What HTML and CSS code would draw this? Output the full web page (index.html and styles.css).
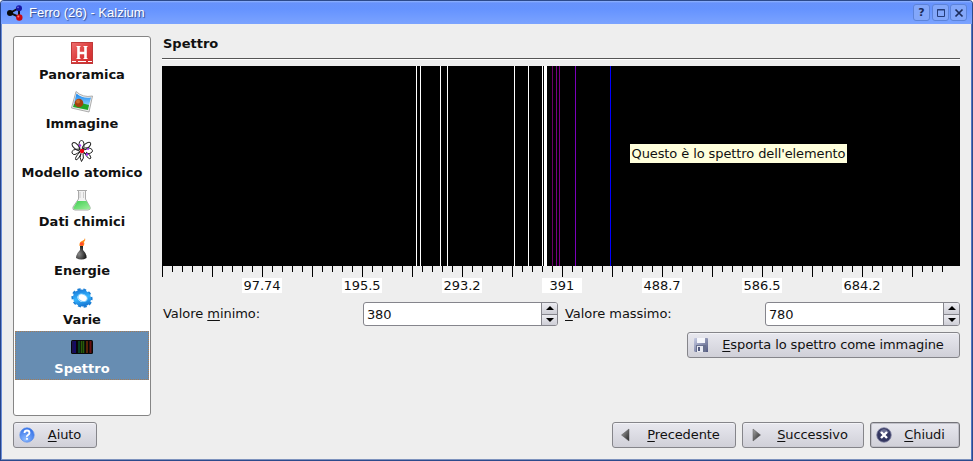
FILE: index.html
```html
<!DOCTYPE html>
<html lang="it">
<head>
<meta charset="utf-8">
<title>Ferro (26) - Kalzium</title>
<link rel="stylesheet" href="styles.css">
</head>
<body>
<svg class="defs" width="0" height="0">
  <defs>
    <linearGradient id="red" x1="0" y1="0" x2="1" y2="1"><stop offset="0" stop-color="#ef7070"/><stop offset=".5" stop-color="#dd4141"/><stop offset="1" stop-color="#cf2929"/></linearGradient>
    <linearGradient id="sky" x1="0" y1="0" x2="0" y2="1"><stop offset="0" stop-color="#1583ee"/><stop offset="1" stop-color="#9bdcff"/></linearGradient>
    <linearGradient id="gear" x1="0" y1="0" x2="1" y2="1"><stop offset="0" stop-color="#1979d8"/><stop offset=".5" stop-color="#35b5ff"/><stop offset="1" stop-color="#126fcd"/></linearGradient>
    <linearGradient id="liq" x1="0" y1="0" x2="1" y2="1"><stop offset="0" stop-color="#3fce50"/><stop offset="1" stop-color="#a2f0a0"/></linearGradient>
    <linearGradient id="arrow" x1="0" y1="0" x2="1" y2="1"><stop offset="0" stop-color="#aaa"/><stop offset="1" stop-color="#222"/></linearGradient>
    <linearGradient id="disk" x1="0" y1="0" x2="1" y2="1"><stop offset="0" stop-color="#c8cde4"/><stop offset="1" stop-color="#50577f"/></linearGradient>
    <radialGradient id="help" cx=".4" cy=".8" r=".8"><stop offset="0" stop-color="#8dbbff"/><stop offset="1" stop-color="#326fe6"/></radialGradient>
    <radialGradient id="flask" cx=".3" cy=".6" r=".7"><stop offset="0" stop-color="#888"/><stop offset="1" stop-color="#151515"/></radialGradient>
  </defs>
</svg>
<div class="window">
  <header class="titlebar">
    <svg class="app-icon" width="16" height="16" viewBox="0 0 16 16"><path d="M3 8 12 3 12 12Z" fill="none" stroke="#111" stroke-width="2"/><circle cx="3" cy="8" r="3" fill="#090909"/><circle cx="12" cy="3.2" r="3" fill="#1717a5"/><circle cx="12.3" cy="12.5" r="3.2" fill="#c90812"/><circle cx="11.3" cy="11.5" r="1" fill="#ff7777"/><circle cx="11" cy="2.4" r=".8" fill="#7777e8"/></svg>
    <span class="title">Ferro (26) - Kalzium</span>
    <span class="wbtn">?</span>
    <span class="wbtn gap"><svg width="10" height="10" viewBox="0 0 10 10"><path d="M1.5 1.5h7v7h-7zM1 2h8" fill="none" stroke="#253c79"/></svg></span>
    <span class="wbtn"><svg width="10" height="10" viewBox="0 0 10 10"><path d="M1.5 1.5l7 7M8.5 1.5l-7 7" stroke="#1c2d5c" stroke-width="1.7"/></svg></span>
  </header>
  <div class="body">
    <main class="main">
      <nav class="list">
        <div class="item"><svg width="22" height="22" viewBox="0 0 22 22"><path d="M0 0h22v22H0z" fill="url(#red)"/><path d="M.5 .5h21v21H.5z" fill="none" stroke="#bf3a3a"/><path d="M7.5 5v12M14.500 5v12M7.500 11h7" stroke="#fff" stroke-width="2.600"/><path d="M5.500 4.500h4M12.500 4.500h4M5.500 16.500h4M12.500 16.500h4M1 19.500h4M7 19.500h8M17 19.500h4" stroke="#fff"/></svg><span>Panoramica</span></div>
        <div class="item"><svg width="22" height="22" viewBox="0 0 22 22"><path d="M5 .5Q12 7 21.500 5L18 21 .5 17Z" fill="#eee" stroke="#999" stroke-width=".8"/><path d="M5.500 2.500Q12 8 20 6.500L17.500 16 2.500 14Z" fill="url(#sky)"/><path d="M3 13 10 12 18 14 17 19 2 16Z" fill="#21a528"/><circle cx="8" cy="12" r="4.300" fill="#a4410f"/><circle cx="7" cy="10.500" r="2" fill="#cb6b2d"/></svg><span>Immagine</span></div>
        <div class="item"><svg width="22" height="22" viewBox="0 0 22 22"><g fill="none" stroke="#222" stroke-width="1"><ellipse cx="10.500" cy="5.500" rx="2.500" ry="5"/><ellipse cx="5" cy="6.500" rx="2.400" ry="4.800" transform="rotate(-45 5 6.500)"/><ellipse cx="15.500" cy="6" rx="2.300" ry="5" transform="rotate(50 15.500 6)"/><ellipse cx="16" cy="10.800" rx="5.500" ry="3"/><path d="M9 9Q0 9 1 13q2 4 8-2M9 12q-6 6-4 8 2 0 5-6M10 13q-2 5 .5 8.500 3-3 1.500-8M13 12q5 9 7 6 0-3-5-6"/></g><circle cx="11" cy="11" r="2.200" fill="#f00014"/><circle cx="9" cy="5.500" r="1.200" fill="#a330ff"/><circle cx="16" cy="14.500" r="1.200" fill="#a330ff"/><circle cx="17" cy="9" r="1" fill="#a330ff"/></svg><span>Modello atomico</span></div>
        <div class="item"><svg width="22" height="22" viewBox="0 0 22 22"><path d="M6 1.500h10M7.500 2v8L2 18q-1 3 2 3h13q3 0 2-3l-4.500-8V2" fill="#f2f2f2" stroke="#aaa"/><path d="M6.500 12h9l4 7q0 1.500-2 1.500H4q-2 0-1.500-2Z" fill="url(#liq)"/><path d="M9 3v6M12.500 3v6" stroke="#ccc"/></svg><span>Dati chimici</span></div>
        <div class="item"><svg width="22" height="22" viewBox="0 0 22 22"><path d="M8.500 8Q8 4 11 3q3-1 3-3 1 2-1 4 1 2-.5 4Z" fill="#ff8b16"/><circle cx="10.700" cy="6" r="1.800" fill="#ff4930"/><path d="M9 8h3v4q4 4 3.500 8-5 3-10.500 0 0-4 4-8Z" fill="url(#flask)"/></svg><span>Energie</span></div>
        <div class="item"><svg width="22" height="22" viewBox="0 0 22 22"><g transform="rotate(25 11 11)"><ellipse cx="11" cy="11" rx="9.300" ry="8" fill="none" stroke="#1c7fd4" stroke-width="3" stroke-dasharray="3 2.450"/><ellipse cx="11" cy="11" rx="7" ry="6" fill="none" stroke="url(#gear)" stroke-width="4.500"/><ellipse cx="11.500" cy="10.500" rx="4.800" ry="3.500" fill="#fff" stroke="#7acbff"/></g></svg><span>Varie</span></div>
        <div class="item selected"><svg width="22" height="22" viewBox="0 0 22 22"><rect x="0" y="4" width="22" height="14" rx="1.500" fill="#080808"/><path d="M2 5v12" stroke="#17104d" stroke-width="2"/><path d="M4 5v12" stroke="#1a0b86" stroke-width="1.500"/><path d="M8 5v12" stroke="#073f22" stroke-width="2"/><path d="M10.500 5v12M12.500 5v12" stroke="#295c08" stroke-width="1.500"/><path d="M16 5v12" stroke="#592407" stroke-width="2"/><path d="M19.500 5v12" stroke="#691010" stroke-width="2"/></svg><span>Spettro</span></div>
      </nav>
      <section class="page">
        <h1>Spettro</h1>
        <div class="spectrum">
          <svg width="798" height="200" viewBox="0 0 798 200" shape-rendering="crispEdges"><path d="M0 0h798v200H0z"/><path d="M254.500 0v200M258.500 0v200M278.500 0v200M285.500 0v200M352.500 0v200M366.500 0v200M380.500 0v200M382.500 0v200M383.500 0v200M384.500 0v200" stroke="#fff"/><path d="M390.500 0v200" stroke="#670067"/><path d="M394.500 0v200M397.500 0v200" stroke="#780084"/><path d="M413.500 0v200" stroke="#7b00ba"/><path d="M448.500 0v200" stroke="#00f"/></svg>
          <div class="tooltip">Questo è lo spettro dell'elemento</div>
        </div>
        <div class="ticks"><div class="minor"></div><div class="major"></div></div>
        <div class="scale"><span>97.74</span><span>195.5</span><span>293.2</span><span>391</span><span>488.7</span><span>586.5</span><span>684.2</span></div>
        <div class="form">
          <label><span>Valore <u>m</u>inimo:</span></label>
          <div class="spin"><span class="value">380</span><span class="steps"><i class="up"></i><i class="down"></i></span></div>
          <label class="second"><span><u>V</u>alore massimo:</span></label>
          <div class="spin"><span class="value">780</span><span class="steps"><i class="up"></i><i class="down"></i></span></div>
        </div>
        <div class="btn export"><svg width="16" height="16" viewBox="0 0 16 16"><path d="M1 2q0-1 1-1h12q1 0 1 1v13H2l-1-1Z" fill="url(#disk)"/><path d="M4 1h8v5H4z" fill="#f5f6fb"/><path d="M3 8h10v7H3z" fill="#69718f"/><path d="M4 9h6v6H4z" fill="#e9ebf3"/><path d="M5 10h2v4H5z" fill="#50587d"/></svg><span><u>E</u>sporta lo spettro come immagine</span></div>
      </section>
    </main>
    <footer class="footer">
      <div class="btn help"><svg width="16" height="16" viewBox="0 0 16 16"><circle cx="8" cy="8" r="7.200" fill="url(#help)" stroke="#568bec" stroke-width=".7"/><path d="M5.500 6Q5.500 3.500 8 3.500T10.500 6Q10.500 7 9 8T8 10M8 11v1.700" stroke="#fff" stroke-width="1.800" fill="none"/></svg><span><u>A</u>iuto</span></div>
      <div class="btn prev"><svg width="16" height="16" viewBox="0 0 16 16"><path d="M11 2v12L3.500 8Z" fill="url(#arrow)" stroke="#555" stroke-width=".5"/></svg><span><u>P</u>recedente</span></div>
      <div class="btn next"><svg width="16" height="16" viewBox="0 0 16 16"><path d="M5 2v12l7.500-6Z" fill="url(#arrow)" stroke="#555" stroke-width=".5"/></svg><span><u>S</u>uccessivo</span></div>
      <div class="btn close"><svg width="16" height="16" viewBox="0 0 16 16"><circle cx="8" cy="8" r="7.300" fill="#343761" stroke="#8587a5" stroke-width=".8"/><path d="M3 5Q8-1 13 5L8 8Z" fill="#8487a8" opacity=".7"/><path d="M5 5l6 6M11 5l-6 6" stroke="#fff" stroke-width="2.400"/></svg><span><u>C</u>hiudi</span></div>
    </footer>
  </div>
</div>
</body>
</html>
```
FILE: styles.css
```css
* { box-sizing: border-box; }
body { margin: 0; font: 13px/16px "DejaVu Sans", sans-serif; color: #111; background: #fff; overflow: hidden; }
.defs { position: absolute; }
svg { display: block; flex: none; }
.window { width: 973px; height: 461px; display: flex; flex-direction: column; background: #eee; border: 1px solid #2c4a8c; border-left-color: #264389; border-radius: 4px 4px 0 0; box-shadow: inset 1px 0 #6a8ed8, inset -1px 0 #5276c2, inset 0 -1px #7d92bd; }
.titlebar { height: 23px; flex: none; display: flex; align-items: center; padding: 0 5px 0 6px; background: linear-gradient(#92b5ff 0, #6792fc 2px, #6593ff 8px, #7ba3ff 100%); border-radius: 3px 3px 0 0; }
.title { flex: 1; margin-left: 6px; font: 13px/20px "Liberation Sans", sans-serif; color: #fff; text-shadow: 1px 1px 1px #324b8c; }
.wbtn { width: 17px; height: 17px; margin-left: 1px; display: flex; align-items: center; justify-content: center; border: 1px solid #5c83d9; border-radius: 3px; background: #83a7fa; color: #1b2c5c; font: bold 11px/14px "DejaVu Sans", sans-serif; }
.wbtn.gap { margin-left: 2px; }
.body { flex: 1; padding: 12px 12px 11px; display: flex; flex-direction: column; }
.main { display: flex; height: 380px; }
.list { width: 138px; height: 380px; padding: 0 1px; background: #fff; border: 1px solid #858585; border-radius: 3px; }
.item { height: 49px; padding-top: 5px; display: flex; flex-direction: column; align-items: center; font-weight: bold; white-space: nowrap; }
.item span { margin-top: 3px; }
.item.selected { background: #678db2; color: #fff; outline: 1px dotted #a47c57; outline-offset: -1px; }
.page { width: 798px; margin-left: 11px; display: flex; flex-direction: column; }
h1 { margin: 0 0 7px; padding-left: 1px; height: 23px; font: bold 13px/16px "DejaVu Sans", sans-serif; border-bottom: 1px solid #555; box-shadow: 0 1px #fff; }
.spectrum { position: relative; height: 200px; }
.tooltip { position: absolute; left: 468px; top: 78px; width: 217px; height: 19px; line-height: 19px; background: #ffffdc; text-align: center; white-space: nowrap; letter-spacing: -.1px; }
.ticks { height: 12px; flex: none; }
.minor { width: 781px; height: 6px; background: repeating-linear-gradient(90deg, #000 0 1px, transparent 1px 10px); }
.major { width: 781px; height: 11px; margin-top: -6px; background: repeating-linear-gradient(90deg, #000 0 1px, transparent 1px 50px); }
.scale { display: flex; gap: 60px; padding-left: 80px; }
.scale span { width: 40px; height: 15px; line-height: 15px; background: #fff; text-align: center; }
.form { display: flex; height: 24px; margin-top: 9px; }
label { width: 201px; padding-left: 1px; line-height: 23px; letter-spacing: -.05px; }
label.second { width: 207px; padding-left: 7px; }
u { text-underline-offset: 2px; text-decoration-thickness: 1px; }
.spin { width: 195px; height: 24px; display: flex; background: #fff; border: 1px solid #85858c; border-radius: 3px; overflow: hidden; }
.value { flex: 1; padding-left: 3px; line-height: 23px; letter-spacing: -.2px; }
.steps { width: 16px; border-left: 1px solid #85858c; display: flex; flex-direction: column; }
.steps i { flex: 1; display: flex; align-items: center; justify-content: center; background: linear-gradient(#ececf1, #ceced6); }
.steps i + i { border-top: 1px solid #85858c; }
.steps i::before { content: ""; border: 4px solid transparent; border-top-width: 0; border-bottom: 4px solid #000; }
.steps i.down::before { border-bottom-width: 0; border-top: 4px solid #000; }
.btn { height: 26px; display: flex; align-items: center; padding-left: 5px; border: 1px solid #85858a; border-radius: 3px; background: linear-gradient(#e8e8ef, #d0d0d8); box-shadow: inset 0 1px #f3f3f7; white-space: nowrap; letter-spacing: -.1px; }
.btn span { flex: 1; text-align: center; padding-right: 2px; }
.export { width: 273px; align-self: flex-end; margin-top: 6px; }
.footer { display: flex; margin-top: 6px; gap: 6px; }
.help { width: 84px; margin-right: auto; }
.prev { width: 124px; }
.next { width: 122px; }
.close { width: 90px; border-color: #737379; box-shadow: inset 0 0 0 1px #c0c0c8; }
```
